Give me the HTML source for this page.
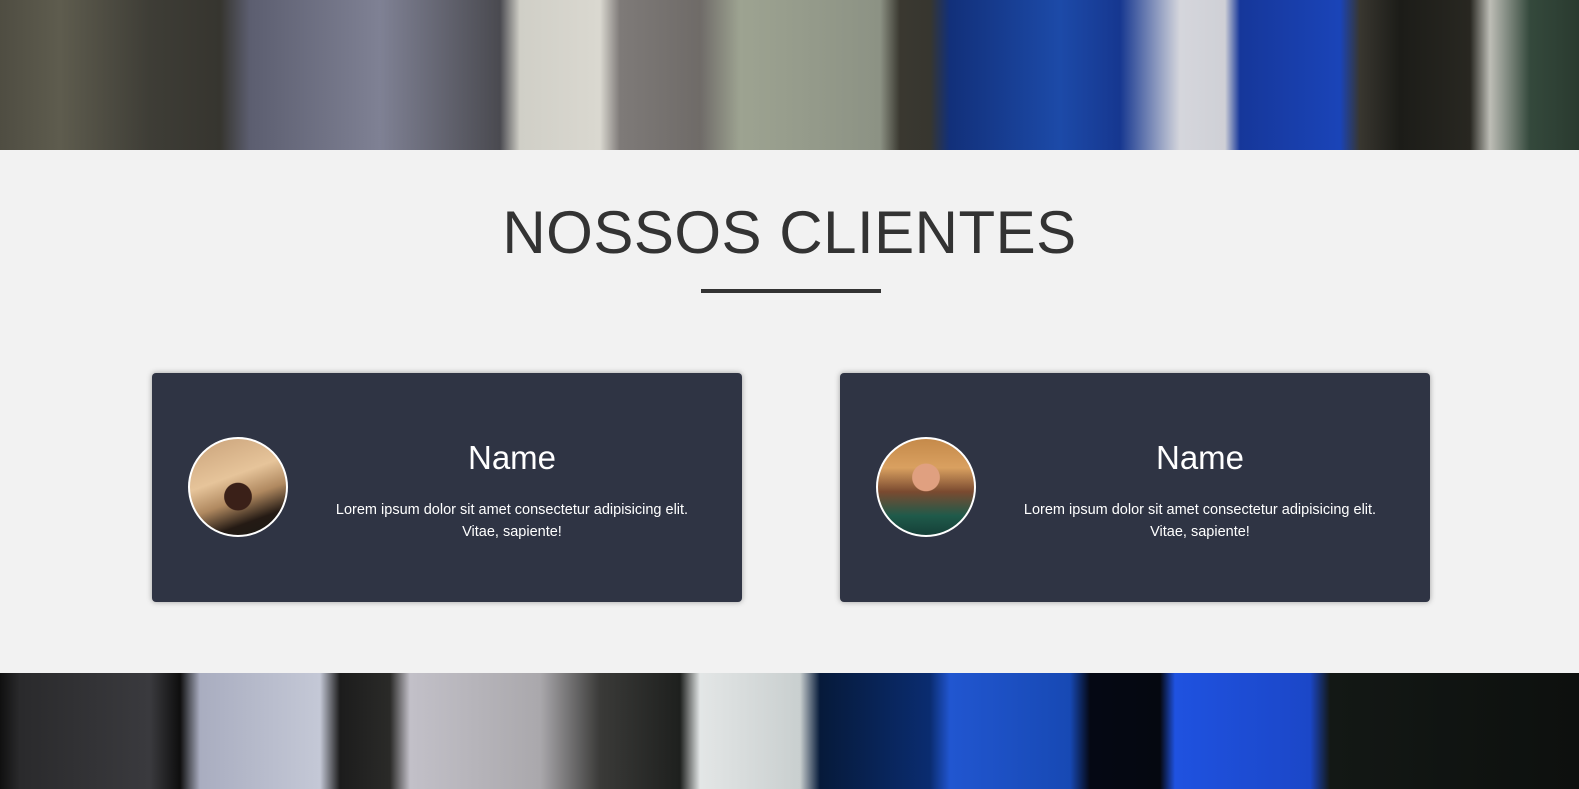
<!DOCTYPE html>
<html><head><meta charset="utf-8"><style>
*{margin:0;padding:0;box-sizing:border-box}
body{width:1579px;height:789px;background:#f2f2f2;font-family:"Liberation Sans",Arial,sans-serif;overflow:hidden;position:relative}
.hdr{position:absolute;left:0;top:0;width:1579px;height:150px;
background:linear-gradient(90deg,#4f4d42 0px,#5e5c4e 60px,#3e3d36 150px,#36352f 220px,#5c5e70 250px,#7f8194 380px,#4a4a50 500px,#d0cfc7 520px,#dad8d0 600px,#7e7a78 620px,#6f6b68 700px,#9da391 740px,#8c9284 880px,#3a3830 900px,#37362f 930px,#12307a 950px,#1c4aa8 1060px,#163790 1120px,#d5d6dc 1180px,#cfd0d6 1225px,#16379a 1240px,#1a44b8 1340px,#38362f 1360px,#1c1c18 1400px,#282721 1470px,#bdbdb6 1490px,#34493c 1530px,#2a3a2f 1579px)}
.ftr{position:absolute;left:0;top:673px;width:1579px;height:116px;
background:linear-gradient(90deg,#101010 0,#2a2a2c 20px,#3a3a3e 150px,#0e0e0e 180px,#a9adc0 200px,#c4c8d6 320px,#1c1c1c 340px,#2a2a28 390px,#c2c0c8 410px,#aaa8ac 540px,#3a3a38 600px,#1e201e 680px,#e3e6e6 700px,#c9cfcf 800px,#061a3a 820px,#0a2c70 930px,#2156d0 950px,#1749b4 1070px,#050814 1090px,#050810 1160px,#1f52e0 1175px,#1b47c8 1310px,#131815 1330px,#0d100e 1579px)}
h1{position:absolute;top:198px;left:0;width:1579px;text-align:center;font-weight:400;font-size:60px;color:#333;letter-spacing:0.5px}
.line{position:absolute;left:701px;top:289px;width:180px;height:4px;background:#333}
.card{position:absolute;top:373px;width:590px;height:229px;background:#2f3444;border-radius:4px;box-shadow:0 0 6px rgba(0,0,0,.35)}
.av{position:absolute;left:36px;top:64px;width:100px;height:100px;border-radius:50%;border:2px solid #fff;overflow:hidden}
.name{position:absolute;left:170px;width:380px;top:66px;text-align:center;color:#fff;font-size:33px}
.txt{position:absolute;left:170px;width:380px;top:126px;text-align:center;color:#fff;font-size:14.5px;line-height:22px}
</style></head><body>
<div class="hdr"></div>
<h1>NOSSOS CLIENTES</h1>
<div class="line"></div>
<div class="card" style="left:152px">
<div class="av" style="background:radial-gradient(circle at 50% 60%,#3a2018 0 18%,transparent 19%),linear-gradient(160deg,#c9a27a 0,#e6c49a 40%,#b08960 60%,#241a14 80%,#1a1a14 100%)"></div>
<div class="name">Name</div>
<div class="txt">Lorem ipsum dolor sit amet consectetur adipisicing elit. Vitae, sapiente!</div>
</div>
<div class="card" style="left:840px">
<div class="av" style="background:radial-gradient(circle at 50% 40%,#e0a080 0 18%,transparent 19%),linear-gradient(180deg,#c58a4a 0,#d9a060 30%,#7a4a30 55%,#1f5a4a 80%,#154038 100%)"></div>
<div class="name">Name</div>
<div class="txt">Lorem ipsum dolor sit amet consectetur adipisicing elit. Vitae, sapiente!</div>
</div>
<div class="ftr"></div>
</body></html>
